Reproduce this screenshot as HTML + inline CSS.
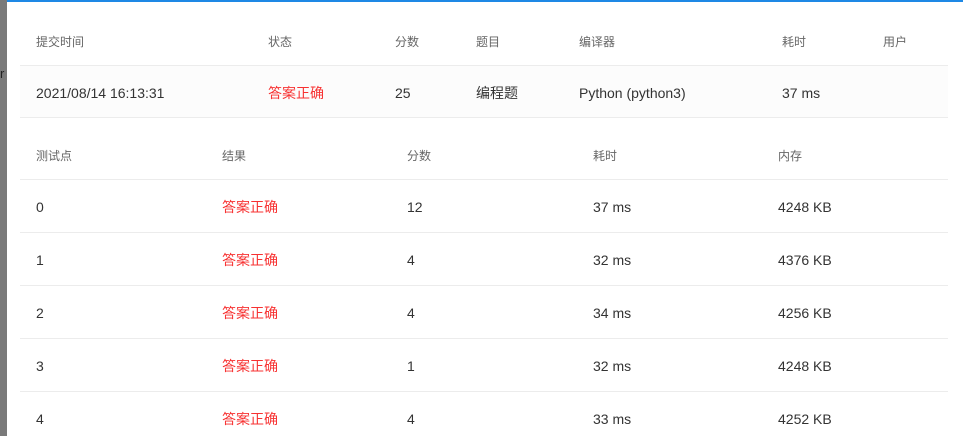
<!DOCTYPE html>
<html><head><style>
body{margin:0;width:963px;height:436px;overflow:hidden;background:#fff;font-family:"Liberation Sans","Noto Sans CJK SC",sans-serif;position:relative}
.strip{position:absolute;left:0;top:0;width:7px;height:436px;background:#7a7a7a}
.r{position:absolute;left:0;top:66px;font-size:13px;color:#222}
.top{position:absolute;left:7px;top:0;right:0;height:2px;background:#1e88e5}
.t{position:absolute;font-size:14px;line-height:20px;height:20px;color:#333;white-space:nowrap}
.h{color:#666;font-size:12px}
.red{color:#f73131}
.line{position:absolute;left:20px;width:928px;height:1px;background:#ececec}
.bg{position:absolute;left:20px;width:928px;top:66px;height:51px;background:#fcfcfc}
</style></head><body>
<div class="strip"></div><div class="r">r</div><div class="top"></div>
<div class="bg"></div>
<div class="line" style="top:65px"></div>
<div class="line" style="top:117px"></div>
<div class="t h" style="left:36px;top:32px">提交时间</div>
<div class="t h" style="left:268px;top:32px">状态</div>
<div class="t h" style="left:395px;top:32px">分数</div>
<div class="t h" style="left:476px;top:32px">题目</div>
<div class="t h" style="left:579px;top:32px">编译器</div>
<div class="t h" style="left:782px;top:32px">耗时</div>
<div class="t h" style="left:883px;top:32px">用户</div>
<div class="t" style="left:36px;top:83px">2021/08/14 16:13:31</div>
<div class="t red" style="left:268px;top:83px">答案正确</div>
<div class="t" style="left:395px;top:83px">25</div>
<div class="t" style="left:476px;top:83px">编程题</div>
<div class="t" style="left:579px;top:83px">Python (python3)</div>
<div class="t" style="left:782px;top:83px">37 ms</div>

<div class="t h" style="left:36px;top:146px">测试点</div>
<div class="t h" style="left:222px;top:146px">结果</div>
<div class="t h" style="left:407px;top:146px">分数</div>
<div class="t h" style="left:593px;top:146px">耗时</div>
<div class="t h" style="left:778px;top:146px">内存</div>
<div class="line" style="top:179px"></div>
<div class="line" style="top:232px"></div>
<div class="line" style="top:285px"></div>
<div class="line" style="top:338px"></div>
<div class="line" style="top:391px"></div>

<div class="t" style="left:36px;top:197px">0</div><div class="t red" style="left:222px;top:197px">答案正确</div><div class="t" style="left:407px;top:197px">12</div><div class="t" style="left:593px;top:197px">37 ms</div><div class="t" style="left:778px;top:197px">4248 KB</div>
<div class="t" style="left:36px;top:250px">1</div><div class="t red" style="left:222px;top:250px">答案正确</div><div class="t" style="left:407px;top:250px">4</div><div class="t" style="left:593px;top:250px">32 ms</div><div class="t" style="left:778px;top:250px">4376 KB</div>
<div class="t" style="left:36px;top:303px">2</div><div class="t red" style="left:222px;top:303px">答案正确</div><div class="t" style="left:407px;top:303px">4</div><div class="t" style="left:593px;top:303px">34 ms</div><div class="t" style="left:778px;top:303px">4256 KB</div>
<div class="t" style="left:36px;top:356px">3</div><div class="t red" style="left:222px;top:356px">答案正确</div><div class="t" style="left:407px;top:356px">1</div><div class="t" style="left:593px;top:356px">32 ms</div><div class="t" style="left:778px;top:356px">4248 KB</div>
<div class="t" style="left:36px;top:409px">4</div><div class="t red" style="left:222px;top:409px">答案正确</div><div class="t" style="left:407px;top:409px">4</div><div class="t" style="left:593px;top:409px">33 ms</div><div class="t" style="left:778px;top:409px">4252 KB</div>
</body></html>
